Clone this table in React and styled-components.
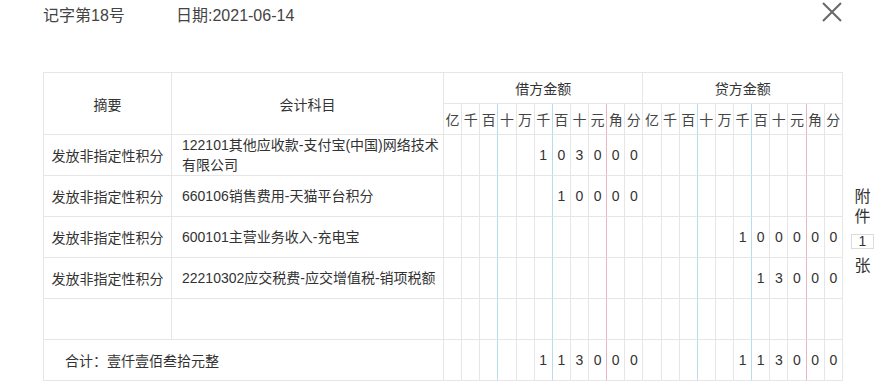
import React from 'react';
import styled, { createGlobalStyle } from 'styled-components';

const GlobalStyle = createGlobalStyle`
  html, body {
    margin: 0;
    padding: 0;
    background: #fff;
  }
  body {
    font-family: "Liberation Sans", "Noto Sans CJK SC", sans-serif;
    color: #333;
  }
`;

const UNITS = ['亿', '千', '百', '十', '万', '千', '百', '十', '元', '角', '分'];

const entries = [
  { summary: '发放非指定性积分', account: '122101其他应收款-支付宝(中国)网络技术有限公司', debit: 103000 },
  { summary: '发放非指定性积分', account: '660106销售费用-天猫平台积分', debit: 10000 },
  { summary: '发放非指定性积分', account: '600101主营业务收入-充电宝', credit: 100000 },
  { summary: '发放非指定性积分', account: '22210302应交税费-应交增值税-销项税额', credit: 13000 },
];

// 金额(分) -> 11 位数字格, 前面空白
const toDigits = (cents) => {
  if (!cents) return Array(11).fill('');
  const s = String(cents);
  return Array(11 - s.length).fill('').concat(s.split(''));
};

const lineColor = (i) => {
  if (i === 2 || i === 5) return '#b5dcef';
  if (i === 8) return '#e8b7bd';
  return '#e6e6e6';
};

const CloseIcon = () => (
  <svg width="22" height="22" viewBox="0 0 22 22">
    <path d="M2 2 L20 20 M20 2 L2 20" stroke="#686868" strokeWidth="2" fill="none" />
  </svg>
);

const DigitCells = ({ cents, head }) =>
  (head ? UNITS : toDigits(cents)).map((d, i) => (
    <DigitCell key={i} $line={lineColor(i)} $head={head}>
      {d}
    </DigitCell>
  ));

const App = () => {
  const totalDebit = entries.reduce((s, e) => s + (e.debit || 0), 0);
  const totalCredit = entries.reduce((s, e) => s + (e.credit || 0), 0);

  return (
    <Page>
      <GlobalStyle />
      <TopBar>
        <VoucherNo>记字第18号</VoucherNo>
        <DateText>日期:2021-06-14</DateText>
        <CloseButton>
          <CloseIcon />
        </CloseButton>
      </TopBar>
      <Body>
        <Voucher>
          <colgroup>
            <col style={{ width: 128 }} />
            <col style={{ width: 272 }} />
            {Array.from({ length: 22 }).map((_, i) => (
              <col key={i} />
            ))}
          </colgroup>
          <thead>
            <HeadRow>
              <HeadCell rowSpan={2}>摘要</HeadCell>
              <HeadCell rowSpan={2}>会计科目</HeadCell>
              <HeadCell colSpan={11}>借方金额</HeadCell>
              <HeadCell colSpan={11}>贷方金额</HeadCell>
            </HeadRow>
            <HeadRow>
              <DigitCells head />
              <DigitCells head />
            </HeadRow>
          </thead>
          <tbody>
            {entries.map((e, i) => (
              <BodyRow key={i}>
                <SummaryCell>{e.summary}</SummaryCell>
                <AccountCell>{e.account}</AccountCell>
                <DigitCells cents={e.debit} />
                <DigitCells cents={e.credit} />
              </BodyRow>
            ))}
            <BodyRow>
              <SummaryCell />
              <AccountCell />
              <DigitCells />
              <DigitCells />
            </BodyRow>
            <BodyRow>
              <TotalCell colSpan={2}>合计：壹仟壹佰叁拾元整</TotalCell>
              <DigitCells cents={totalDebit} />
              <DigitCells cents={totalCredit} />
            </BodyRow>
          </tbody>
        </Voucher>
        <Attachment>
          <AttachLabel>附</AttachLabel>
          <AttachLabel>件</AttachLabel>
          <AttachCount>1</AttachCount>
          <AttachLabel $gap>张</AttachLabel>
        </Attachment>
      </Body>
    </Page>
  );
};

const Page = styled.div`
  width: 882px;
  padding-left: 43px;
  box-sizing: border-box;
`;

const TopBar = styled.div`
  width: 800px;
  height: 28px;
  display: flex;
  align-items: center;
  font-size: 16px;
  color: #444;
`;

const VoucherNo = styled.span`
  width: 133px;
`;

const DateText = styled.span`
  flex: 1;
`;

const CloseButton = styled.div`
  display: flex;
  align-items: center;
  justify-content: center;
  width: 22px;
  height: 22px;
  margin-top: -4px;
  cursor: pointer;
`;

const Body = styled.div`
  display: flex;
  align-items: center;
  margin-top: 44px;
`;

const Voucher = styled.table`
  width: 800px;
  table-layout: fixed;
  border-collapse: separate;
  border-spacing: 0;
  border-top: 1px solid #e6e6e6;
  border-left: 1px solid #e6e6e6;
  font-size: 14px;
  color: #333;
`;

const HeadRow = styled.tr`
  height: 31px;
`;

const BodyRow = styled.tr`
  height: 41px;
`;

const Cell = styled.td`
  padding: 0;
  border-right: 1px solid #e6e6e6;
  border-bottom: 1px solid #e6e6e6;
  vertical-align: middle;
`;

const HeadCell = styled(Cell).attrs({ as: 'th' })`
  font-weight: normal;
  text-align: center;
`;

const DigitCell = styled(Cell)`
  border-right-color: ${(p) => p.$line};
  text-align: center;
  font-size: 14px;
  color: ${(p) => (p.$head ? '#444' : '#333')};
`;

const SummaryCell = styled(Cell)`
  text-align: center;
`;

const AccountCell = styled(Cell)`
  padding: 0 3px 0 10px;
  line-height: 20px;
`;

const TotalCell = styled(Cell)`
  padding-left: 21px;
`;

const Attachment = styled.div`
  flex: 1;
  display: flex;
  flex-direction: column;
  align-items: center;
  padding-top: 9px;
  font-size: 16px;
  color: #333;
`;

const AttachLabel = styled.div`
  line-height: 20px;
  margin-top: ${(p) => (p.$gap ? '7px' : '0')};
`;

const AttachCount = styled.div`
  width: 21px;
  height: 13px;
  margin-top: 7px;
  border: 1px solid #dcdcdc;
  font-size: 14px;
  line-height: 13px;
  text-align: center;
`;

export default App;
